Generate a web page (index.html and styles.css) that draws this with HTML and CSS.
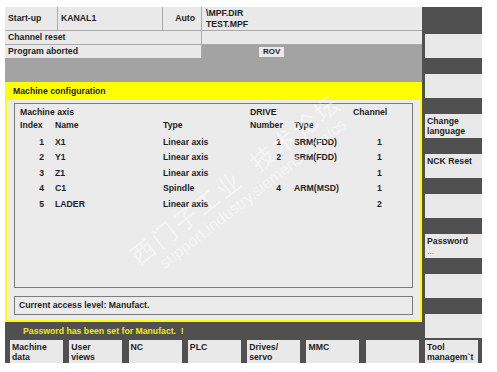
FILE: index.html
```html
<!DOCTYPE html>
<html>
  <head>
    <meta charset="UTF-8">
    <title>Machine configuration</title>
    <link rel="stylesheet" href="styles.css">
  </head>
  <body>
    <div class="screen">
      <div class="main">
        <div class="left">
          <div class="status">
            <div class="cell">Start-up</div>
            <div class="cell">KANAL1</div>
            <div class="cell right">Auto</div>
            <div class="cell path">\MPF.DIR<br>TEST.MPF</div>
            <div class="cell wide">Channel reset</div>
            <div class="cell"></div>
            <div class="cell wide">Program aborted</div>
            <div class="cell gray"><span class="rov">ROV</span></div>
          </div>
          <div class="gray-band"></div>

          <div class="panel">
            <div class="panel-title">Machine configuration</div>
            <div class="panel-body">
              <div class="axis-box">
                <div class="axis-grid">
                  <div class="span3">Machine axis</div>
                  <div class="span2">DRIVE</div>
                  <div>Channel</div>

                  <div>Index</div>
                  <div class="pad-name">Name</div>
                  <div>Type</div>
                  <div>Number</div>
                  <div class="pad-type">Type</div>
                  <div></div>
                </div>
                <div class="axis-grid rows">
                  <div class="num">1</div><div class="pad-name">X1</div><div>Linear axis</div>
                  <div class="num">1</div><div class="pad-type">SRM(FDD)</div><div class="pad-chan">1</div>

                  <div class="num">2</div><div class="pad-name">Y1</div><div>Linear axis</div>
                  <div class="num">2</div><div class="pad-type">SRM(FDD)</div><div class="pad-chan">1</div>

                  <div class="num">3</div><div class="pad-name">Z1</div><div>Linear axis</div>
                  <div class="num"></div><div class="pad-type"></div><div class="pad-chan">1</div>

                  <div class="num">4</div><div class="pad-name">C1</div><div>Spindle</div>
                  <div class="num">4</div><div class="pad-type">ARM(MSD)</div><div class="pad-chan">1</div>

                  <div class="num">5</div><div class="pad-name">LADER</div><div>Linear axis</div>
                  <div class="num"></div><div class="pad-type"></div><div class="pad-chan">2</div>
                </div>
              </div>
              <div class="access">Current access level: Manufact.</div>

              <div class="watermark wm-cn">西门子工业&nbsp;&nbsp;技术论坛</div>
              <div class="watermark wm-url">support.industry.siemens.com/cs</div>
            </div>
          </div>

          <div class="message">Password has been set for Manufact.&nbsp; !</div>
        </div>

        <div class="vkeys">
          <div class="key"></div>
          <div class="key"></div>
          <div class="key">Change<br>language</div>
          <div class="key">NCK Reset</div>
          <div class="key"></div>
          <div class="key">Password<br><span class="dots">...</span></div>
          <div class="key"></div>
          <div class="key"></div>
        </div>
      </div>

      <div class="hkeys">
        <div class="key">Machine<br>data</div>
        <div class="key">User<br>views</div>
        <div class="key">NC</div>
        <div class="key">PLC</div>
        <div class="key">Drives/<br>servo</div>
        <div class="key">MMC</div>
        <div class="key"></div>
        <div class="key">Tool<br>managem`t</div>
      </div>
    </div>
  </body>
</html>
```

FILE: styles.css
```css
body {
  margin: 0;
  background: #fff;
  font-family: "Liberation Sans", Arial, sans-serif;
  font-size: 8.7px;
  font-weight: bold;
  color: #1e1e1e;
}

.screen {
  width: 477px;
  margin: 7px 0 0 5px;
}

.main {
  display: flex;
  height: 333px;
}

.left {
  width: 417px;
  display: flex;
  flex-direction: column;
}

/* status header */
.status {
  display: grid;
  grid-template-columns: 52px 104px 38px 1fr;
  grid-template-rows: 23px 13px 13px;
  gap: 1px;
  background: #a9a9a9;
}

.cell {
  background: #e9e9e9;
  padding-left: 3px;
  line-height: 13px;
  display: flex;
  align-items: center;
  white-space: nowrap;
}

.cell.right {
  justify-content: flex-end;
  padding-right: 6px;
}

.cell.path {
  line-height: 11px;
  padding-left: 4px;
}

.cell.wide {
  grid-column: span 3;
}

.cell.gray {
  background: #a3a3a3;
}

.rov {
  background: #e9e9e9;
  margin-left: 54px;
  padding: 0 4px;
  line-height: 10px;
  font-size: 8px;
}

.gray-band {
  height: 24px;
  background: #a3a3a3;
}

/* machine configuration panel */
.panel {
  height: 240px;
  box-sizing: border-box;
  border: 2px solid #ffff00;
  border-top: 0;
  background: #ebebeb;
  display: flex;
  flex-direction: column;
}

.panel-title {
  background: #ffff00;
  height: 18px;
  line-height: 18px;
  padding-left: 8px;
  margin: 0 -2px;
}

.panel-body {
  position: relative;
  flex: 1;
  padding: 3px 7px 5px;
}

.axis-box {
  height: 185px;
  box-sizing: border-box;
  border: 1px solid #7c7c7c;
  padding-top: 2px;
  margin-bottom: 8px;
}

.axis-grid {
  display: grid;
  grid-template-columns: 24px 119px 87px 31px 72px 1fr;
  grid-auto-rows: 13px;
  line-height: 13px;
  padding-left: 5px;
  white-space: nowrap;
}

.axis-grid.rows {
  grid-auto-rows: 15.5px;
  line-height: 15.5px;
  margin-top: 2.5px;
}

.span3 {
  grid-column: span 3;
}

.span2 {
  grid-column: span 2;
}

.num {
  text-align: right;
}

.pad-name {
  padding-left: 11px;
}

.pad-type {
  padding-left: 13px;
}

.pad-chan {
  padding-left: 24px;
}

.access {
  height: 19px;
  box-sizing: border-box;
  border: 1px solid #7c7c7c;
  line-height: 17px;
  padding-left: 4px;
}

/* faint forum watermark over the panel */
.watermark {
  position: absolute;
  transform: translate(-50%, -50%) rotate(-38deg);
  color: rgba(255, 255, 255, 0.5);
  white-space: nowrap;
  font-weight: normal;
  pointer-events: none;
}

.wm-cn {
  left: 228px;
  top: 78px;
  font-family: "Noto Sans CJK SC", sans-serif;
  font-size: 24px;
  letter-spacing: 3px;
}

.wm-url {
  left: 246px;
  top: 94px;
  font-family: "Liberation Sans", sans-serif;
  font-size: 16px;
}

.message {
  flex: 1;
  background: #505050;
  color: #eded00;
  line-height: 18px;
  padding-left: 18px;
}

/* softkeys */
.key {
  background: #e9e9e9;
  line-height: 10px;
  padding: 2px 2px 0;
  white-space: nowrap;
  overflow: hidden;
}

.vkeys {
  width: 60px;
  box-sizing: border-box;
  background: #505050;
  padding: 27px 0 0 3px;
  display: flex;
  flex-direction: column;
  gap: 16px;
}

.vkeys .key {
  height: 24px;
  box-sizing: border-box;
}

.dots {
  color: #8a8a8a;
  font-weight: normal;
}

.hkeys {
  height: 23px;
  background: #505050;
  padding: 0 4px 0 5px;
  display: flex;
  gap: 6.3px;
}

.hkeys .key {
  flex: 1;
}
```
